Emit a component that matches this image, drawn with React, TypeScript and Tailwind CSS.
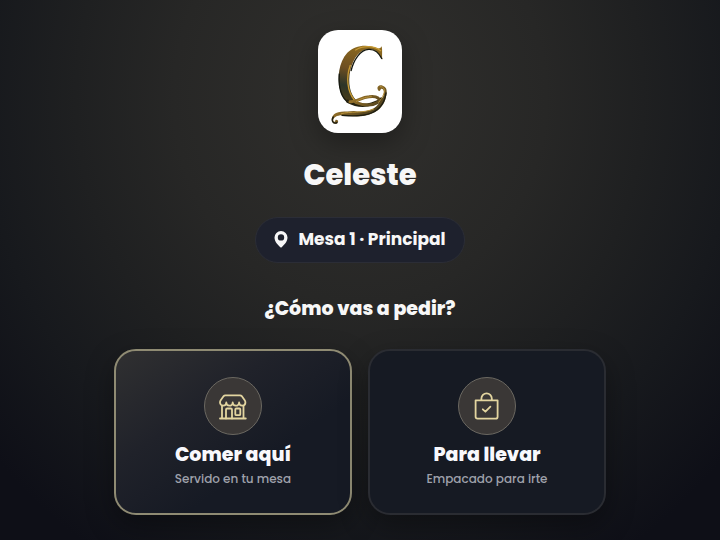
import React from 'react';

interface OrderOption {
  id: string;
  title: string;
  subtitle: string;
  icon: React.ReactNode;
  highlighted?: boolean;
}

const StoreIcon: React.FC = () => (
  <svg
    className="w-7 h-7"
    viewBox="0 0 28 28"
    fill="none"
    stroke="currentColor"
    strokeWidth="1.8"
    strokeLinecap="round"
    strokeLinejoin="round"
    aria-hidden="true"
  >
    <path d="M6.300 3.300h14.800q1 0 1.600.8l3 4.200q.7 1 .7 2.200a3.100 3.100 0 0 1-6.300 0 3.200 3.200 0 0 1-6.400 0 3.200 3.200 0 0 1-6.400 0 3.100 3.100 0 0 1-6.300 0q0-1.200.7-2.200l3-4.200q.6-.8 1.600-.8Z" />
    <path d="M3 14v12.400M24.500 14v12.400M1 26.500h25.800" />
    <path d="M7 26.400v-8.700q0-1.200 1.200-1.200h3.600q1.200 0 1.200 1.200v8.700" />
    <rect x="16.3" y="16.5" width="5" height="6.7" rx="1" />
  </svg>
);

const BagIcon: React.FC = () => (
  <svg
    className="w-7 h-7"
    viewBox="0 0 28 28"
    fill="none"
    stroke="currentColor"
    strokeWidth="1.8"
    strokeLinecap="round"
    strokeLinejoin="round"
    aria-hidden="true"
  >
    <path d="M2.6 8.3h22v16.4q0 2-2 2h-18q-2 0-2-2Z" />
    <path d="M8.4 8.2V6.5a5.2 5.2 0 0 1 10.4 0v1.7" />
    <path d="m9.8 17.3 2.6 2.4 5-5" />
  </svg>
);

const PinIcon: React.FC = () => (
  <svg className="w-3.5 h-[18px]" viewBox="0 0 14 18" fill="currentColor" aria-hidden="true">
    <path
      fillRule="evenodd"
      d="M7 0A6.500 6.500 0 0 0 .5 6.500c0 4.300 3.700 7.600 5.600 9.600q.9 1 1.800 0C9.800 14.100 13.500 10.800 13.500 6.500A6.500 6.500 0 0 0 7 0Zm0 3.200a3.200 3.200 0 1 1 0 6.400 3.200 3.200 0 0 1 0-6.400Z"
    />
  </svg>
);

const Logo: React.FC = () => (
  <svg className="w-[84px] h-[103px]" viewBox="24 29 252 309" role="img" aria-label="Logo de Celeste">
    <defs>
      <linearGradient id="gold" x1="85" y1="90" x2="235" y2="300" gradientUnits="userSpaceOnUse">
        <stop offset="0" stopColor="#8a6414" />
        <stop offset="0.25" stopColor="#5d431a" />
        <stop offset="0.5" stopColor="#a67d2c" />
        <stop offset="0.75" stopColor="#5f4b1f" />
        <stop offset="1" stopColor="#2c2d1c" />
      </linearGradient>
      <linearGradient id="stem" x1="150" y1="80" x2="115" y2="250" gradientUnits="userSpaceOnUse">
        <stop offset="0" stopColor="#8a681f" />
        <stop offset="0.4" stopColor="#6e4f22" />
        <stop offset="0.7" stopColor="#2c3528" />
        <stop offset="1" stopColor="#4d3d16" />
      </linearGradient>
    </defs>
    {/* letter body */}
    <path
      fill="url(#stem)"
      d="M215 78C218 90 215 105 217 118C208 99 196 86 176 86C150 87 130 112 121 150C113 188 120 222 139 240L132 251C115 249 101 239 92 214C80 174 86 125 112 97C134 74 173 70 202 84Q210 87 215 78Z"
    />
    <path
      fill="none"
      stroke="#15180f"
      strokeWidth="4"
      d="M216 116C207 97 194 86 176 87C151 88 131 118 123 152M88 160C84 205 96 237 117 247"
    />
    <path
      fill="none"
      stroke="#c79a34"
      strokeWidth="4"
      strokeLinecap="round"
      d="M212 91C190 75 158 76 137 89M121 135C108 170 111 212 133 239"
    />
    {/* flourish */}
    <path
      fill="none"
      stroke="#24210f"
      strokeWidth="10"
      strokeLinecap="round"
      d="M113 243C139 257 163 258 185 251C201 246 211 240 214 236"
    />
    <path
      fill="none"
      stroke="url(#gold)"
      strokeWidth="9"
      strokeLinecap="round"
      d="M120 244C143 246 152 230 177 229C202 225 216 238 202 247C183 258 157 254 137 246"
    />
    <path
      fill="url(#gold)"
      d="M207 213C196 201 207 192 218 196C232 200 232 215 228 230C224 250 211 269 189 278C157 294 122 287 99 285C82 284 70 291 70 300C71 307 77 305 76 299C85 296 88 307 79 310C67 312 62 297 68 287C77 271 106 275 132 272C159 277 186 271 200 257C211 245 222 231 222 215C220 204 213 203 211 210Z"
    />
    <path
      fill="none"
      stroke="#1d1d11"
      strokeWidth="4"
      strokeLinecap="round"
      d="M228 218C225 246 208 269 184 278C151 291 115 286 96 285M70 290C62 301 70 312 81 307"
    />
    <path
      fill="none"
      stroke="#b8923c"
      strokeWidth="3"
      strokeLinecap="round"
      d="M139 243C151 237 160 231 184 229M94 280C120 272 159 280 191 266M211 199C222 198 226 210 221 221C218 231 212 239 206 246"
    />
  </svg>
);

const options: OrderOption[] = [
  {
    id: 'comer',
    title: 'Comer aquí',
    subtitle: 'Servido en tu mesa',
    icon: <StoreIcon />,
    highlighted: true
  },
  {
    id: 'llevar',
    title: 'Para llevar',
    subtitle: 'Empacado para irte',
    icon: <BagIcon />
  }
];

const OptionCard: React.FC<{ option: OrderOption }> = ({ option }) => (
  <button
    type="button"
    className={`flex flex-col items-center rounded-[22px] border-2 px-4 pt-[26px] pb-6 shadow-[0_10px_28px_rgba(0,0,0,0.35)] ${
      option.highlighted
        ? 'border-[#8f8b73] bg-[#161922] bg-[linear-gradient(145deg,#303031_0%,#20222a_35%,#161a24_65%)]'
        : 'border-[#2a2c32] bg-[#161a23]'
    }`}
  >
    <span className="flex h-[58px] w-[58px] items-center justify-center rounded-full border border-[#6b6861] bg-[#3a3736] text-[#e3d5a0]">
      {option.icon}
    </span>
    <span className="mt-1.5 text-[19px] leading-7 font-extrabold text-[#f8f8fc]">{option.title}</span>
    <span className="text-xs leading-5 font-medium text-[#9fa1ab]">{option.subtitle}</span>
  </button>
);

const App: React.FC = () => {
  return (
    <main className="min-h-screen bg-[#0d0e16] bg-[radial-gradient(ellipse_68%_100%_at_50%_18%,#31302d_0%,#272726_38%,#1f2021_58%,#17191d_77%,#0e0f17_100%)] px-6 pt-[30px] pb-6 font-['Poppins','Inter',sans-serif] text-[#f7f7f7]">
      <div className="mx-auto flex max-w-[492px] flex-col items-center">
        <div className="overflow-hidden rounded-[20px] bg-white shadow-[0_10px_28px_rgba(0,0,0,0.35)]">
          <Logo />
        </div>

        <h1 className="mt-6 text-[29px] leading-9 font-extrabold">Celeste</h1>

        <div className="mt-6 flex h-[46px] items-center gap-2.5 rounded-full border border-[#2b2d36] bg-[#1e212d] px-[18px]">
          <PinIcon />
          <span className="text-[17px] font-bold">Mesa 1 · Principal</span>
        </div>

        <h2 className="mt-8 text-[19px] leading-7 font-extrabold">¿Cómo vas a pedir?</h2>

        <div className="mt-[26px] grid w-full grid-cols-2 gap-4">
          {options.map((option) => (
            <OptionCard key={option.id} option={option} />
          ))}
        </div>
      </div>
    </main>
  );
};

export default App;
